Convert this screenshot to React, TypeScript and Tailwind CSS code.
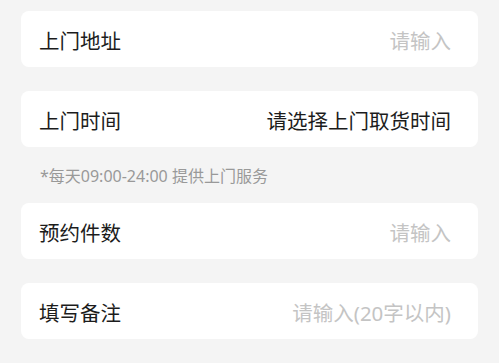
export default function App() {
  const font = { fontFamily: '"Noto Sans", "Noto Sans CJK SC", sans-serif' };

  return (
    <div className="min-h-[363px] w-full bg-[#f4f4f4] px-[21px] pt-[11px]" style={font}>
      <Row label="上门地址" value="请输入" placeholder />
      <div className="h-6" />
      <Row label="上门时间" value="请选择上门取货时间" />
      <p className="pl-[19px] pt-[19px] pb-[17px] text-[16px] leading-[20px] text-[#999999]">
        *每天09:00-24:00 提供上门服务
      </p>
      <Row label="预约件数" value="请输入" placeholder />
      <div className="h-6" />
      <Row label="填写备注" value="请输入(20字以内)" placeholder />
    </div>
  );
}

function Row({ label, value, placeholder }: { label: string; value: string; placeholder?: boolean }) {
  return (
    <div className="flex h-14 items-center justify-between rounded-lg bg-white pl-[18px] pr-[27px] pt-[3px]">
      <span className="text-[20.5px] leading-7 text-[#1c1c1c]">{label}</span>
      <span className={`text-[20.5px] leading-7 ${placeholder ? "text-[#c4c4c4]" : "text-[#1c1c1c]"}`}>{value}</span>
    </div>
  );
}
